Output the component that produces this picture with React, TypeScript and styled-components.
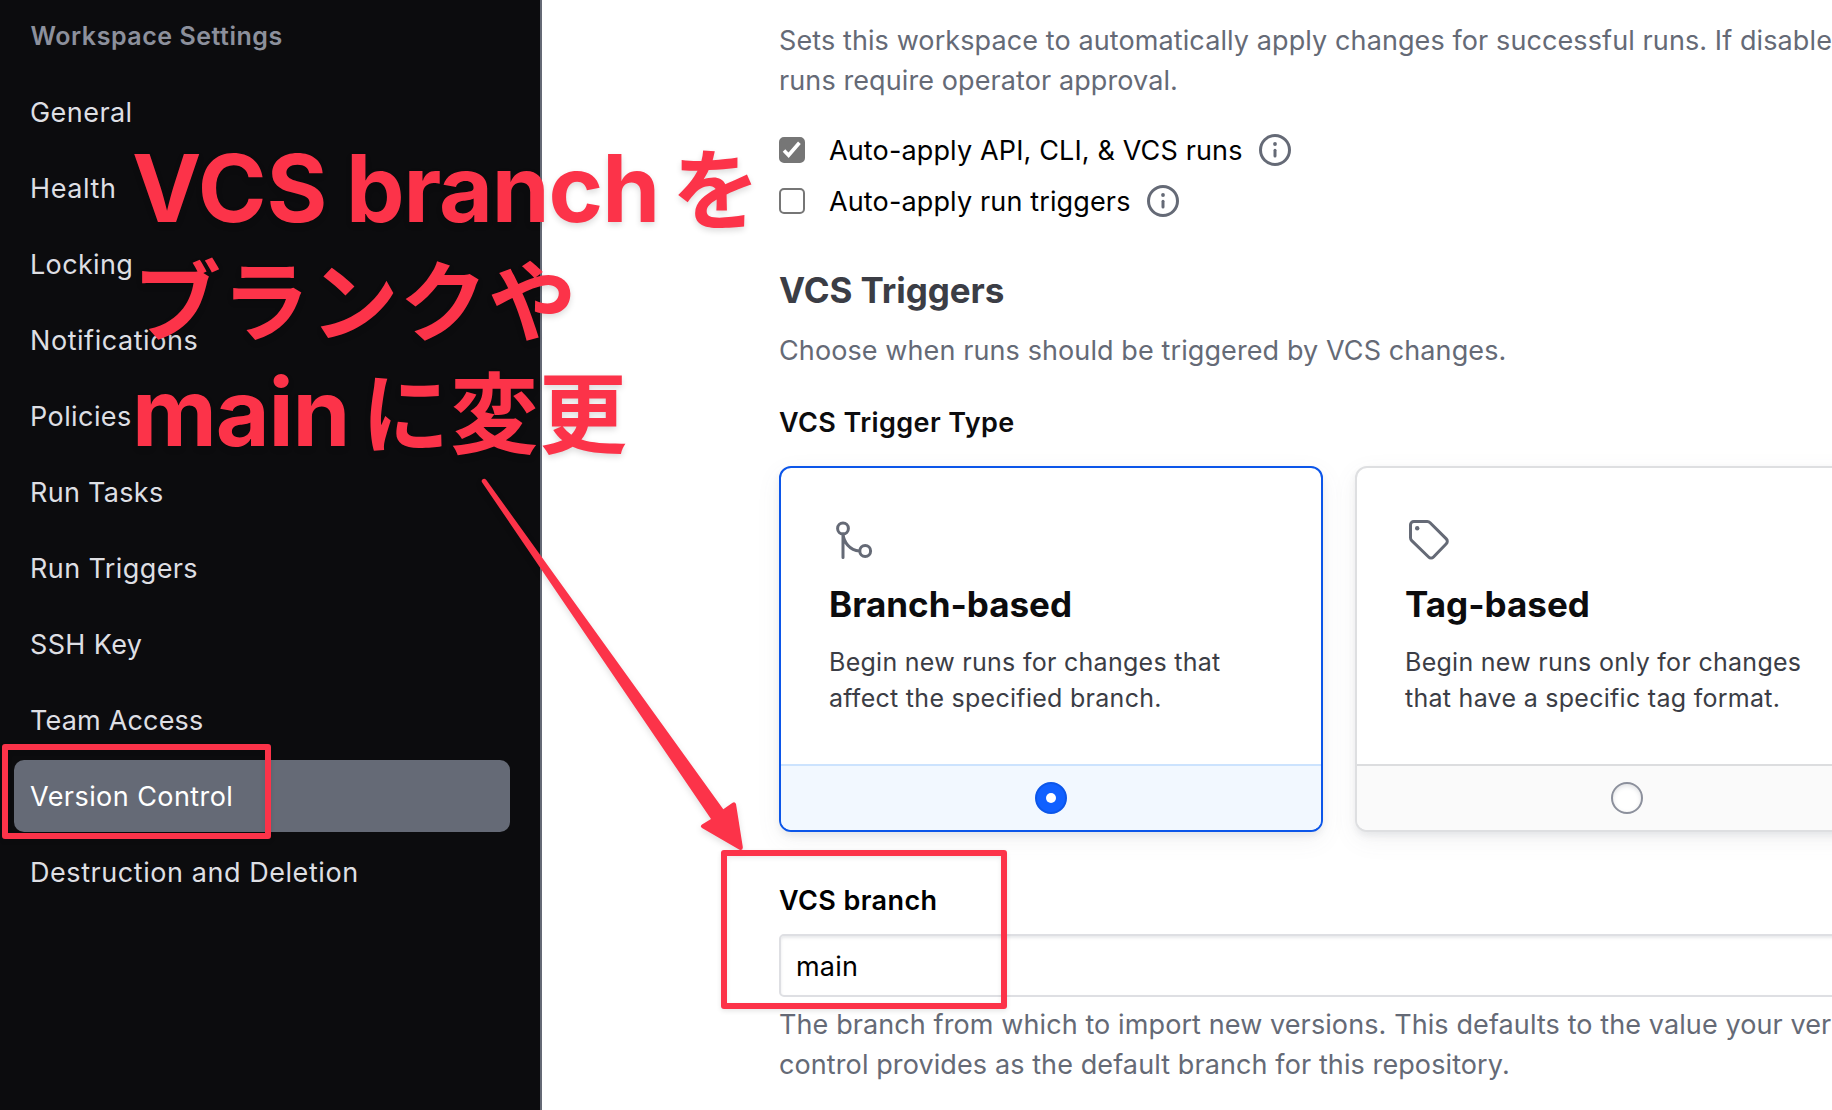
import React from 'react';
import styled, { createGlobalStyle } from 'styled-components';

const color = {
  ink: '#0c0c0e',
  strong: '#3b3d45',
  faint: '#656a76',
  muted: '#8c909c',
  note: '#fc3349',
};

const GlobalStyle = createGlobalStyle`
  *, *::before, *::after { box-sizing: border-box; }
  body {
    margin: 0;
    background: #fff;
    font-family: Inter, "Noto Sans CJK JP", sans-serif;
    font-size: 27px;
    line-height: 33px;
    color: ${color.ink};
  }
  h2, h3, h4, p, ul { margin: 0; padding: 0; }
`;

const Page = styled.div`
  position: relative;
  display: flex;
  width: 100%;
  height: 1110px;
  overflow: hidden;
`;

/* Sidebar */

const Sidebar = styled.nav`
  flex: none;
  width: 542px;
  padding: 21px 30px 0 14px;
  background: ${color.ink};
  border-right: 2px solid ${color.faint};
`;

const SidebarTitle = styled.h4`
  margin-bottom: 25px;
  padding-left: 16.5px;
  font-size: 25px;
  font-weight: 600;
  line-height: 30px;
  letter-spacing: 0.53px;
  color: ${color.muted};
`;

const NavList = styled.ul`
  display: flex;
  flex-direction: column;
  gap: 4px;
  list-style: none;
`;

const NavItem = styled.li<{ $active: boolean; $tracking: number }>`
  height: 72px;
  padding: 20px 16px 19px;
  border-radius: 10px;
  letter-spacing: ${(p) => p.$tracking}px;
  color: ${(p) => (p.$active ? '#fff' : '#dedfe3')};
  background: ${(p) => (p.$active ? color.faint : 'transparent')};
`;

/* Main column */

const Main = styled.main`
  flex: 1;
  min-width: 0;
  padding: 21px 0 0 237px;
  overflow: hidden;
`;

const Form = styled.div`
  display: flex;
  flex-direction: column;
  width: 1120px;
`;

const HelpText = styled.p`
  line-height: 40px;
  letter-spacing: 0.1px;
  color: ${color.faint};
`;

const Options = styled.div`
  display: flex;
  flex-direction: column;
  gap: 19px;
  margin: 33px 0 52px;
`;

const Option = styled.label`
  display: flex;
  align-items: center;
  height: 32px;
`;

const OptionText = styled.span`
  padding-top: 1px;
  margin: 0 16px 0 24px;
  letter-spacing: 0.14px;
  color: #000;
`;

const Checkbox = styled.span<{ $checked: boolean }>`
  display: flex;
  width: 26px;
  height: 26px;
  border: 2px solid #767676;
  border-radius: 5px;
  background: ${(p) => (p.$checked ? '#767676' : '#fff')};
`;

const SectionTitle = styled.h2`
  margin-bottom: 20px;
  font-size: 35px;
  font-weight: 650;
  line-height: 42px;
  letter-spacing: -0.08px;
  color: ${color.strong};
`;

const FieldLabel = styled.h4`
  font-size: 27px;
  font-weight: 600;
  letter-spacing: 0.4px;
`;

const TriggerLabel = styled(FieldLabel)`
  margin: 35px 0 27px;
`;

const BranchLabel = styled(FieldLabel)`
  margin: 52px 0 17px;
  color: #000;
`;

const Cards = styled.div`
  display: grid;
  grid-template-columns: 1fr 1fr;
  gap: 32px;
`;

const Card = styled.section<{ $selected: boolean }>`
  height: 366px;
  border: 2px solid ${(p) => (p.$selected ? '#0c56e9' : '#dedfe1')};
  border-radius: 12px;
  overflow: hidden;
  background: #fff;
  box-shadow: 0 4px 6px rgba(101, 106, 118, 0.1), 0 8px 24px rgba(101, 106, 118, 0.08);
`;

const CardBody = styled.div`
  display: flex;
  flex-direction: column;
  gap: 19px;
  height: 296px;
  padding: 48px 48px 0;
`;

const CardTitle = styled.h3`
  font-size: 35px;
  font-weight: 700;
  line-height: 42px;
  letter-spacing: 0;
`;

const CardText = styled.p`
  max-width: 420px;
  font-size: 25px;
  line-height: 36px;
  letter-spacing: 0.28px;
  color: ${color.strong};
`;

const CardFooter = styled.div<{ $selected: boolean }>`
  display: flex;
  align-items: center;
  justify-content: center;
  height: 66px;
  border-top: 2px solid ${(p) => (p.$selected ? '#cce3fe' : '#dcdddf')};
  background: ${(p) => (p.$selected ? '#f2f8ff' : '#fafafa')};
`;

const Radio = styled.span<{ $selected: boolean }>`
  display: flex;
  align-items: center;
  justify-content: center;
  width: 32px;
  height: 32px;
  border: 2px solid ${(p) => (p.$selected ? '#0c56e9' : color.muted)};
  border-radius: 50%;
  background: ${(p) => (p.$selected ? '#1060ff' : '#fff')};
  box-shadow: ${(p) => (p.$selected ? 'none' : 'inset 0 2px 4px rgba(101, 106, 118, 0.2)')};
`;

const RadioDot = styled.span`
  width: 10px;
  height: 10px;
  border-radius: 50%;
  background: #fff;
`;

const TextInput = styled.input`
  width: 100%;
  height: 63px;
  margin-bottom: 8px;
  padding: 14px 15px 12px;
  border: 2px solid #dedfe3;
  border-radius: 5px;
  font: inherit;
  letter-spacing: 0.2px;
  color: #000;
  box-shadow: inset 0 2px 3px rgba(101, 106, 118, 0.15);
`;

/* Annotations drawn over the page */

const Note = styled.div`
  position: absolute;
  left: 132px;
  top: 132px;
  font-size: 93px;
  font-weight: 700;
  line-height: 112px;
  letter-spacing: -1.15px;
  white-space: nowrap;
  color: ${color.note};
  text-shadow: 0 3px 6px rgba(0, 0, 0, 0.14);
`;

const Capitals = styled.span`
  margin-right: -2.2px;
  letter-spacing: 0;
`;

const Kana = styled.span<{ $gap: number }>`
  margin-left: ${(p) => p.$gap}px;
  font-family: "Noto Sans CJK JP", sans-serif;
  font-size: 88px;
  line-height: 0;
  letter-spacing: 0.8px;
`;

const Frame = styled.div<{ $x: number; $y: number; $w: number; $h: number }>`
  position: absolute;
  left: ${(p) => p.$x}px;
  top: ${(p) => p.$y}px;
  width: ${(p) => p.$w}px;
  height: ${(p) => p.$h}px;
  border: 6px solid ${color.note};
  border-radius: 3px;
  box-shadow: 0 2px 5px rgba(0, 0, 0, 0.1), inset 0 2px 5px rgba(0, 0, 0, 0.08);
`;

const ArrowLayer = styled.svg`
  position: absolute;
  left: 470px;
  top: 470px;
  filter: drop-shadow(0 3px 3px rgba(0, 0, 0, 0.12));
`;

const Arrow = () => (
  <ArrowLayer width="290" height="400" viewBox="470 470 290 400">
    <path
      d="M482 482.200 L711 819 L702 824.500 Q699.600 826.300 702 828 L739.500 849.800 Q743 850.600 742.800 847 L736 804 Q734.800 801.200 732.200 803 L723.300 809.300 L486.300 480 Q484.600 478 482.600 479.200 Q481 480.600 482 482.200Z"
      fill={color.note}
    />
  </ArrowLayer>
);

const InfoIcon = () => (
  <svg width="32" height="32" viewBox="0 0 32 32" fill="none" stroke={color.faint} strokeWidth="3">
    <circle cx="16" cy="16" r="14.5" />
    <path d="M16 16.3v5.7" strokeLinecap="round" />
    <circle cx="16" cy="10" r="1.9" fill={color.faint} stroke="none" />
  </svg>
);

const CheckIcon = () => (
  <svg width="22" height="22" viewBox="2 2 22 22" fill="none" stroke="#fff" strokeWidth="3.6">
    <path d="M5 13.6 9.6 18.3 20.4 5.8" />
  </svg>
);

const BranchIcon = () => (
  <svg width="48" height="48" viewBox="0 0 48 48" fill="none" stroke={color.faint} strokeWidth="3" strokeLinecap="round">
    <circle cx="14" cy="12.5" r="5.4" />
    <circle cx="36.2" cy="35" r="5.4" />
    <path d="M14 18v23.6M14 18c.8 8 6.500 16.500 16.500 17" />
  </svg>
);

const TagIcon = () => (
  <svg width="48" height="48" viewBox="0 0 48 48" fill="none" stroke={color.faint} strokeWidth="3" strokeLinejoin="round">
    <path d="M8.800 5.500H22.300a4 4 0 0 1 2.800 1.200L41.300 22.900a3.400 3.400 0 0 1 0 4.800L28.500 41a3.400 3.400 0 0 1-4.900 0L6.700 24.600a4 4 0 0 1-1.200-2.800V8.800a3.300 3.300 0 0 1 3.300-3.300Z" />
    <circle cx="12.200" cy="12.200" r="2.200" fill={color.faint} stroke="none" />
  </svg>
);

const navItems = [
  { label: 'General', tracking: 0.45 },
  { label: 'Health', tracking: 0.6 },
  { label: 'Locking', tracking: 0.35 },
  { label: 'Notifications', tracking: 0.55 },
  { label: 'Policies', tracking: 0.42 },
  { label: 'Run Tasks', tracking: 0.3 },
  { label: 'Run Triggers', tracking: 0.4 },
  { label: 'SSH Key', tracking: 0.35 },
  { label: 'Team Access', tracking: 0.18 },
  { label: 'Version Control', tracking: 0.43, active: true },
  { label: 'Destruction and Deletion', tracking: 0.56 },
];

const options = [
  { label: 'Auto-apply API, CLI, & VCS runs', checked: true },
  { label: 'Auto-apply run triggers', checked: false },
];

const triggerTypes = [
  {
    title: 'Branch-based',
    text: 'Begin new runs for changes that affect the specified branch.',
    icon: <BranchIcon />,
    selected: true,
  },
  {
    title: 'Tag-based',
    text: 'Begin new runs only for changes that have a specific tag format.',
    icon: <TagIcon />,
    selected: false,
  },
];

export default function App() {
  return (
    <>
      <GlobalStyle />
      <Page>
        <Sidebar>
          <SidebarTitle>Workspace Settings</SidebarTitle>
          <NavList>
            {navItems.map((item) => (
              <NavItem key={item.label} $active={!!item.active} $tracking={item.tracking}>
                {item.label}
              </NavItem>
            ))}
          </NavList>
        </Sidebar>

        <Main>
          <Form>
            <HelpText>
              Sets this workspace to automatically apply changes for successful runs. If disabled, runs require
              operator approval.
            </HelpText>
            <Options>
              {options.map((option) => (
                <Option key={option.label}>
                  <Checkbox $checked={option.checked}>{option.checked && <CheckIcon />}</Checkbox>
                  <OptionText>{option.label}</OptionText>
                  <InfoIcon />
                </Option>
              ))}
            </Options>

            <SectionTitle>VCS Triggers</SectionTitle>
            <HelpText>Choose when runs should be triggered by VCS changes.</HelpText>

            <TriggerLabel>VCS Trigger Type</TriggerLabel>
            <Cards>
              {triggerTypes.map((type) => (
                <Card key={type.title} $selected={type.selected}>
                  <CardBody>
                    {type.icon}
                    <CardTitle>{type.title}</CardTitle>
                    <CardText>{type.text}</CardText>
                  </CardBody>
                  <CardFooter $selected={type.selected}>
                    <Radio $selected={type.selected}>{type.selected && <RadioDot />}</Radio>
                  </CardFooter>
                </Card>
              ))}
            </Cards>

            <BranchLabel>VCS branch</BranchLabel>
            <TextInput defaultValue="main" />
            <HelpText>
              The branch from which to import new versions. This defaults to the value your version control provides
              as the default branch for this repository.
            </HelpText>
          </Form>
        </Main>

        <Note>
          <div>
            <Capitals>VCS</Capitals> branch<Kana $gap={13}>を</Kana>
          </div>
          <div>
            <Kana $gap={1}>ブランクや</Kana>
          </div>
          <div>
            main<Kana $gap={12}>に変更</Kana>
          </div>
        </Note>
        <Arrow />
        <Frame $x={2} $y={744} $w={269} $h={95} />
        <Frame $x={721} $y={850} $w={286} $h={159} />
      </Page>
    </>
  );
}
